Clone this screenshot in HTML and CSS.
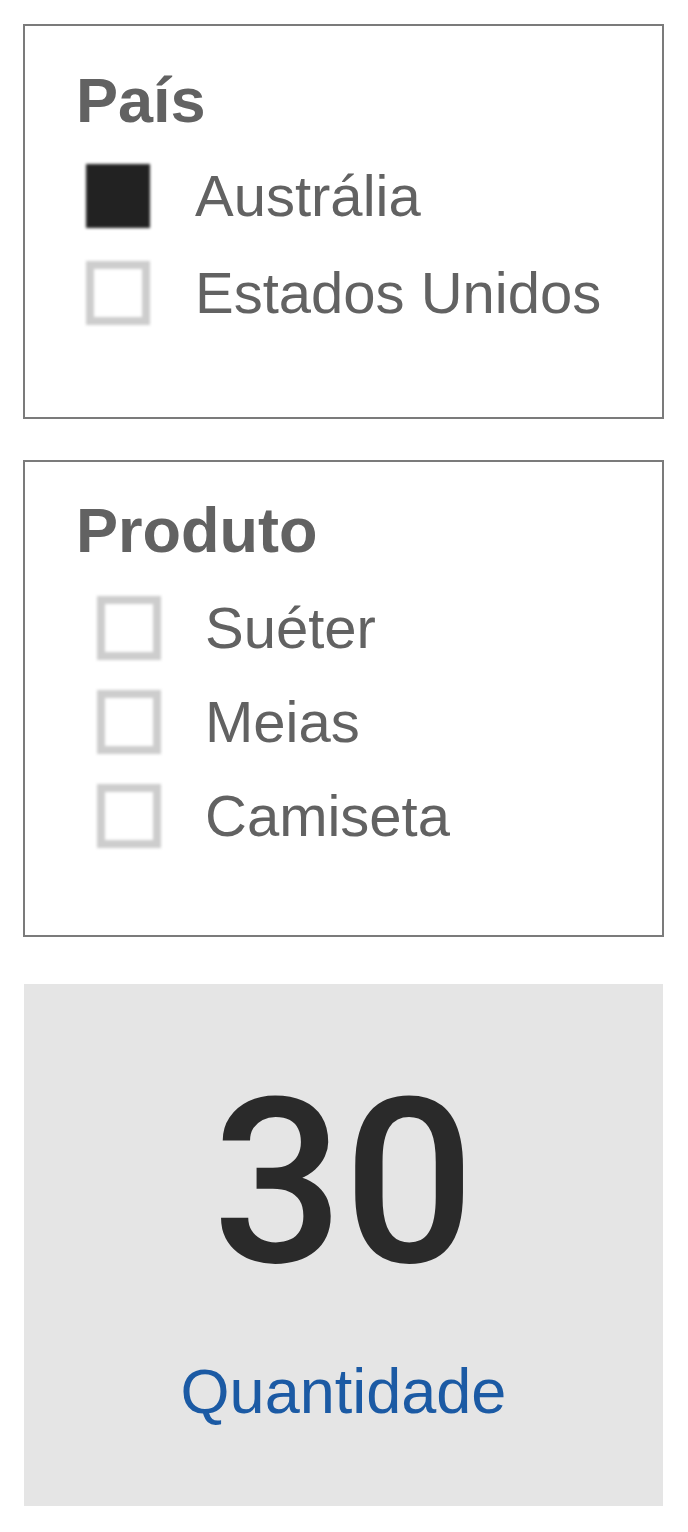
FILE: index.html
```html
<!DOCTYPE html>
<html lang="pt">
<head>
  <meta charset="UTF-8">
  <title>Filtros</title>
  <link rel="stylesheet" href="styles.css">
</head>
<body>

<div class="page">

  <!-- Filtro de país -->
  <section class="filter filter-country">
    <h2 class="filter-title">País</h2>
    <ul class="options">
      <li class="option"><span class="box checked"></span>Austrália</li>
      <li class="option"><span class="box"></span>Estados Unidos</li>
    </ul>
  </section>

  <!-- Filtro de produto -->
  <section class="filter filter-product">
    <h2 class="filter-title">Produto</h2>
    <ul class="options">
      <li class="option"><span class="box"></span>Suéter</li>
      <li class="option"><span class="box"></span>Meias</li>
      <li class="option"><span class="box"></span>Camiseta</li>
    </ul>
  </section>

  <!-- Cartão com total -->
  <section class="kpi">
    <div class="kpi-value">30</div>
    <div class="kpi-label">Quantidade</div>
  </section>

</div>

</body>
</html>
```

FILE: styles.css
```css
body {
  margin: 0;
  background: #fff;
  font-family: "Liberation Sans", Arial, sans-serif;
}

.page {
  padding-top: 24px;
}

.filter {
  margin: 0 24px 41px 23px;
  border: 2px solid #7b7b7b;
  padding: 39px 0 91px 51px;
  color: #626262;
}

.filter-product {
  padding-top: 33px;
  padding-bottom: 86px;
  margin-bottom: 47px;
}

.filter-title {
  margin: 0 0 28px;
  font-size: 63px;
  line-height: 70px;
  font-weight: bold;
}

.filter-product .filter-title {
  margin-bottom: 30px;
}

.options {
  list-style: none;
  margin: 0;
  padding: 0 0 0 10px;
  display: flex;
  flex-direction: column;
  gap: 31px;
}

.filter-product .options {
  padding-left: 21px;
  gap: 28px;
}

.option {
  display: flex;
  align-items: center;
  gap: 45px;
  font-size: 58px;
  line-height: 66px;
  height: 66px;
}

.filter-product .option {
  gap: 44px;
}

.box {
  width: 64px;
  height: 64px;
  box-sizing: border-box;
  border: 8px solid #cdcdcd;
  background: #fff;
  filter: blur(1.5px);
  flex-shrink: 0;
}

.box.checked {
  background: #222;
  border-color: #222;
}

.kpi {
  margin: 0 25px 0 24px;
  background: #e5e5e5;
  padding: 84px 0 80px;
  text-align: center;
}

.kpi-value {
  font-family: Roboto, "Liberation Sans", sans-serif;
  font-weight: 500;
  font-size: 231px;
  line-height: 231px;
  color: #2a2a2a;
}

.kpi-label {
  margin-top: 57px;
  font-size: 63px;
  line-height: 70px;
  color: #1b5aa4;
}
```
